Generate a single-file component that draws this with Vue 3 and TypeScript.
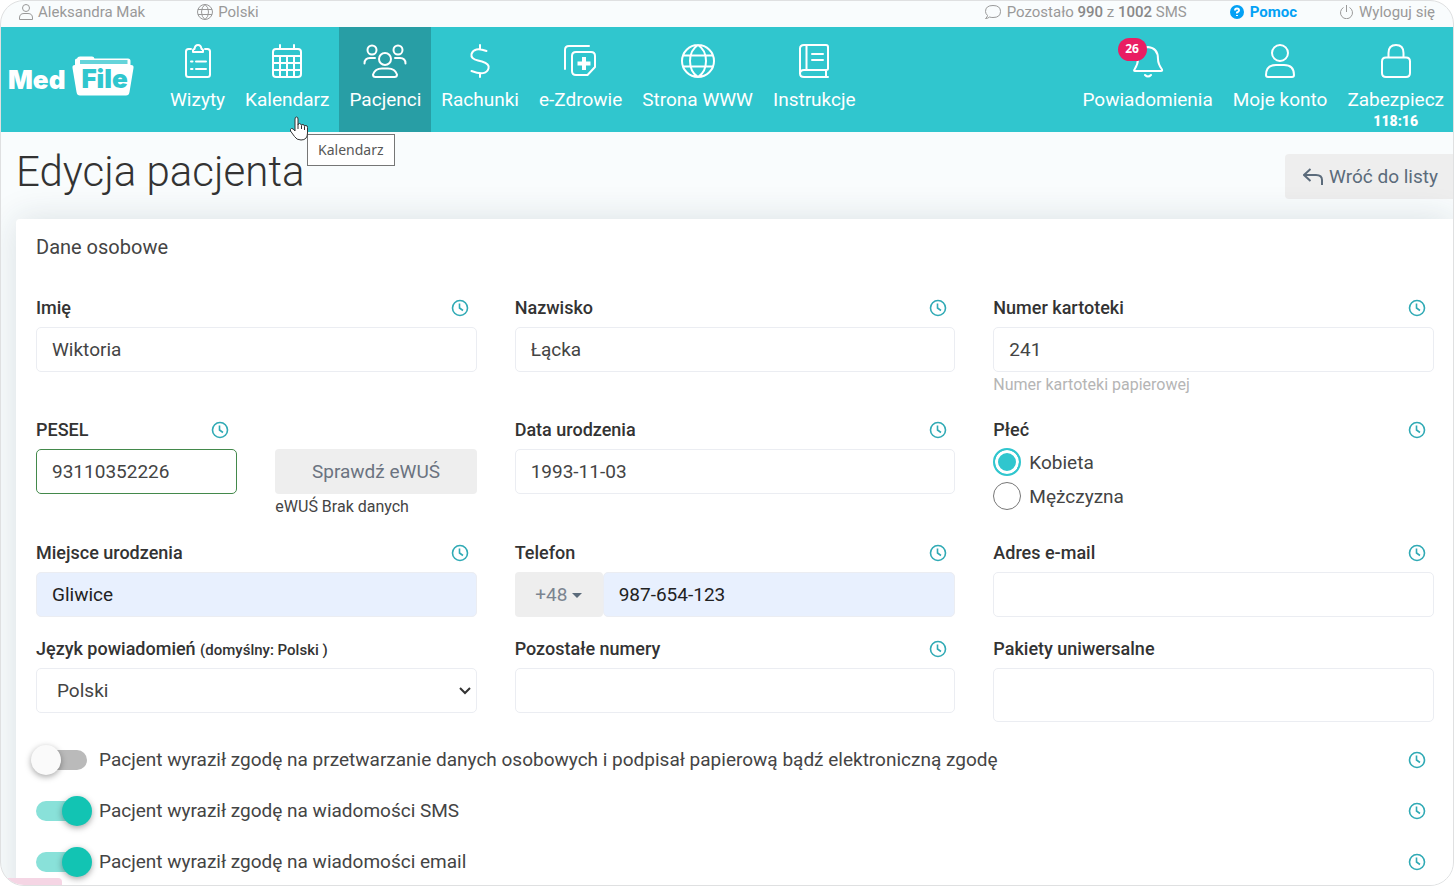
<script setup lang="ts">
import { ref } from 'vue'

interface NavItem { id: string; label: string; active?: boolean; badge?: number; timer?: string }

const mainNav: NavItem[] = [
  { id: 'visits', label: 'Wizyty' },
  { id: 'calendar', label: 'Kalendarz' },
  { id: 'patients', label: 'Pacjenci', active: true },
  { id: 'bills', label: 'Rachunki' },
  { id: 'ehealth', label: 'e-Zdrowie' },
  { id: 'globe', label: 'Strona WWW' },
  { id: 'book', label: 'Instrukcje' },
]
const sideNav: NavItem[] = [
  { id: 'bell', label: 'Powiadomienia', badge: 26 },
  { id: 'user', label: 'Moje konto' },
  { id: 'lock', label: 'Zabezpiecz', timer: '118:16' },
]

/* stroke outlines on a 44 x 34 canvas */
const icons: Record<string, string> = {
  visits: 'M15 5H12.500Q10 5 10 7.500V30.500Q10 33 12.500 33H31.500Q34 33 34 30.500V7.500Q34 5 31.500 5H29M17 8V6.500Q17 5 18.500 5Q19 1 22 1T25.500 5Q27 5 27 6.500V8ZM15 17.500H16.500M15 25H16.500M20 17.500H30M20 25H30',
  calendar: 'M11 5H33Q36 5 36 8V30Q36 33 33 33H11Q8 33 8 30V8Q8 5 11 5ZM8 12H36M8 19H36M8 26H36M15 12V33M22 12V33M29 12V33M15 1V5M29 1V5',
  patients: 'M13.500 6A4.500 4.500 0 1 1 4.500 6A4.500 4.500 0 1 1 13.500 6ZM39.500 6A4.500 4.500 0 1 1 30.500 6A4.500 4.500 0 1 1 39.500 6ZM28 15A6 6 0 1 1 16 15A6 6 0 1 1 28 15ZM1.500 19.500Q1.500 14 7 14H12M42.500 19.500Q42.500 14 37 14H32M12.500 33H31.500Q34 33 34 30.500Q32 24.500 25 24.500H19Q12 24.500 10 30.500Q10 33 12.500 33Z',
  bills: 'M22 1V4.500M22 29.500V33M28.500 7Q16 2.500 13.500 10Q12.500 15 20 16.500L24 17.500Q32 20 30.500 24.500Q28 32.500 13.500 27',
  ehealth: 'M6 25V6Q6 2 10 2H30M17 8H32Q36 8 36 12V23L28.500 31H17Q13 31 13 27V12Q13 8 17 8Z',
  globe: 'M38 17A16 16 0 1 1 6 17A16 16 0 1 1 38 17ZM22 1Q14 6 14 17T22 33Q30 28 30 17T22 1M8 11.500H36M8 22.500H36',
  book: 'M12 1H34Q36 1 36 3V24.500Q36 26 34 26H12Q8 26 8 29.500T12 33H36M8 29.500V4.500Q8 1 12 1M14.500 1V26M34 26V33M20 10H31M20 16H31',
  bell: 'M22 3Q32 4 32 15Q32 20 36 25.500Q36.500 27 35 27H9Q7.500 27 8.500 25.500Q12 20 12 15Q12 4 22 3ZM19 31Q22 34 25 31',
  user: 'M30 9A8 8 0 1 1 14 9A8 8 0 1 1 30 9ZM8 31Q8 21 18 21H26Q36 21 36 31Q36 33 34 33H10Q8 33 8 31Z',
  lock: 'M12 13.500H32Q36 13.500 36 17.500V29Q36 33 32 33H12Q8 33 8 29V17.500Q8 13.500 12 13.500ZM14.500 13.500V9Q14.500 1 22 1T29.500 9V13.500',
}

interface Field { id: string; label: string; value: string; note?: string; help?: string; kind?: string; history?: boolean }

const fields = ref<Field[]>([
  { id: 'first', label: 'Imię', value: 'Wiktoria', history: true },
  { id: 'last', label: 'Nazwisko', value: 'Łącka', history: true },
  { id: 'file', label: 'Numer kartoteki', value: '241', help: 'Numer kartoteki papierowej', history: true },
  { id: 'pesel', label: 'PESEL', value: '93110352226', kind: 'pesel', history: true },
  { id: 'birth', label: 'Data urodzenia', value: '1993-11-03', history: true },
  { id: 'sex', label: 'Płeć', value: 'Kobieta', kind: 'gender', history: true },
  { id: 'place', label: 'Miejsce urodzenia', value: 'Gliwice', kind: 'filled', history: true },
  { id: 'phone', label: 'Telefon', value: '987-654-123', kind: 'phone', history: true },
  { id: 'email', label: 'Adres e-mail', value: '', history: true },
  { id: 'lang', label: 'Język powiadomień', note: '(domyślny: Polski )', value: 'Polski', kind: 'select' },
  { id: 'numbers', label: 'Pozostałe numery', value: '', history: true },
  { id: 'packs', label: 'Pakiety uniwersalne', value: '', kind: 'area' },
])

const consents = ref([
  { id: 'data', on: false, text: 'Pacjent wyraził zgodę na przetwarzanie danych osobowych i podpisał papierową bądź elektroniczną zgodę' },
  { id: 'sms', on: true, text: 'Pacjent wyraził zgodę na wiadomości SMS' },
  { id: 'mail', on: true, text: 'Pacjent wyraził zgodę na wiadomości email' },
])
</script>

<template>
  <div class="frame">
    <div class="topbar">
      <a href="#" class="top-link user-link">
        <svg width="14" height="16" viewBox="0 0 14 16"><path d="M10.500 4A3.500 3.500 0 1 1 3.500 4A3.500 3.500 0 1 1 10.500 4ZM.5 14Q.5 9.500 5 9.500H9Q13.500 9.500 13.500 14V15.500H.5Z" /></svg>
        Aleksandra Mak
      </a>
      <a href="#" class="top-link">
        <svg width="16" height="16" viewBox="0 0 16 16"><path d="M15.500 8A7.500 7.500 0 1 1 .5 8A7.500 7.500 0 1 1 15.500 8ZM8 .5Q4.500 3 4.500 8T8 15.500Q11.500 13 11.500 8T8 .5M1 5.500H15M1 10.500H15" /></svg>
        Polski
      </a>
      <div class="top-right">
        <span class="top-link">
          <svg width="16" height="16" viewBox="0 0 16 16"><path d="M2.500 11.500Q.5 9.500 .5 7.500Q.5 1.500 8 1.500T15.500 7.500T8 13.500Q6 13.500 4.500 13Q3 14.500 .5 14.500Q2.500 13 2.500 11.500Z" /></svg>
          <span>Pozostało <b>990</b> z <b>1002</b> SMS</span>
        </span>
        <a href="#" class="top-link help-link">
          <svg width="14" height="14" viewBox="0 0 14 14"><circle cx="7" cy="7" r="7" fill="#03a1f5" stroke="none" /><path d="M5 5.500Q5 3.500 7 3.500T9 5.500Q9 6.500 7 7.500V8.500M7 10V11" stroke="#fff" stroke-width="2" /></svg>
          Pomoc
        </a>
        <a href="#" class="top-link">
          <svg width="13" height="14" viewBox="0 0 13 14"><path d="M3.500 2.500A6 6 0 1 0 9.500 2.500M6.500 0V7" /></svg>
          Wyloguj się
        </a>
      </div>
    </div>

    <nav class="nav">
      <a href="#" class="logo" aria-label="Med file">
        <span class="logo-med">Med</span>
        <span class="logo-folder">
          <svg width="62" height="40" viewBox="0 0 62 40">
            <path d="M3 11V4Q3 2.500 5 2.500Q5.500 .5 8 .5H20Q22 .5 22.500 2.500H56Q58.500 2.500 58.500 5V11Z" fill="#fff" />
            <path d="M8 4H55.500V8H8Z" fill="#30c6ce" fill-opacity=".75" />
            <path d="M3 9H59Q62 9 61.500 12L57.500 36Q57 39.500 54 39.500H8Q5 39.500 4.500 36L.5 12Q0 9 3 9Z" fill="#fff" />
          </svg>
          <span class="logo-file">File</span>
        </span>
      </a>
      <a v-for="n in mainNav" :key="n.id" href="#" class="nav-item" :class="{ active: n.active }">
        <svg width="44" height="34" viewBox="0 0 44 34"><path :d="icons[n.id]" /><path v-if="n.id === 'ehealth'" d="M25 13V26M18.500 19.500H31.500" class="thick" /></svg>
        <span>{{ n.label }}</span>
      </a>
      <div class="nav-right">
        <a v-for="n in sideNav" :key="n.id" href="#" class="nav-item">
          <span class="icon-wrap">
            <svg width="44" height="34" viewBox="0 0 44 34"><path :d="icons[n.id]" /></svg>
            <span v-if="n.badge" class="badge">{{ n.badge }}</span>
          </span>
          <span>{{ n.label }}</span>
          <span v-if="n.timer" class="timer">{{ n.timer }}</span>
        </a>
      </div>
    </nav>

    <header class="heading">
      <h1>Edycja pacjenta</h1>
      <button type="button" class="back">
        <svg width="20" height="18" viewBox="0 0 20 18"><path d="M7.500 1L1 7L7.500 13M1 7H13Q19 7 19 12V17" /></svg>
        Wróć do listy
      </button>
    </header>

    <main class="card">
      <h2>Dane osobowe</h2>
      <form class="grid" @submit.prevent>
        <div v-for="f in fields" :key="f.id" class="field" :class="f.kind">
          <div class="label-row">
            <label :for="f.id">{{ f.label }} <small v-if="f.note">{{ f.note }}</small></label>
            <svg v-if="f.history" class="clock" width="18" height="18" viewBox="0 0 18 18"><circle cx="9" cy="9" r="7.500" /><path d="M8.500 4.500V9L12 11.500" /></svg>
          </div>

          <template v-if="f.kind === 'pesel'">
            <input :id="f.id" v-model="f.value" type="text" class="control valid" />
            <div class="ewus">
              <button type="button" class="check">Sprawdź eWUŚ</button>
              <p class="status">eWUŚ Brak danych</p>
            </div>
          </template>
          <div v-else-if="f.kind === 'gender'" class="radios">
            <label v-for="(o, i) in ['Kobieta', 'Mężczyzna']" :key="o" class="radio">
              <input :id="i ? undefined : f.id" v-model="f.value" type="radio" name="sex" :value="o" />{{ o }}
            </label>
          </div>
          <div v-else-if="f.kind === 'phone'" class="phone-group">
            <button type="button" class="prefix">+48 <svg width="10" height="5" viewBox="0 0 10 5"><path d="M0 0H10L5 5Z" /></svg></button>
            <input :id="f.id" v-model="f.value" type="tel" class="control autofill" />
          </div>
          <div v-else-if="f.kind === 'select'" class="select-wrap">
            <select :id="f.id" v-model="f.value" class="control"><option>Polski</option></select>
            <svg class="chevron" width="12" height="8" viewBox="0 0 12 8"><path d="M1 1L6 6L11 1" /></svg>
          </div>
          <textarea v-else-if="f.kind === 'area'" :id="f.id" v-model="f.value" class="control tall"></textarea>
          <input v-else :id="f.id" v-model="f.value" type="text" class="control" :class="{ autofill: f.kind === 'filled' }" />
          <p v-if="f.help" class="help">{{ f.help }}</p>
        </div>
      </form>

      <div class="consents">
        <div v-for="c in consents" :key="c.id" class="consent">
          <label><input v-model="c.on" type="checkbox" class="toggle" />{{ c.text }}</label>
          <svg class="clock" width="18" height="18" viewBox="0 0 18 18"><circle cx="9" cy="9" r="7.500" /><path d="M8.500 4.500V9L12 11.500" /></svg>
        </div>
      </div>
    </main>

    <div class="tooltip" role="tooltip">Kalendarz</div>
    <svg class="cursor" width="20" height="26" viewBox="0 0 20 26"><path d="M6 15V3Q6 1 7.500 1T9 3V9Q9 7.500 10.500 7.500T12.500 9.500Q12.500 8.500 14 8.500T15.500 10.500Q15.500 9.500 17 9.500T18.500 11.500V17Q18.500 24 12 24Q7.500 24 5.500 20.500L1.500 15Q1 13 2.500 12.500T6 15Z" /><path d="M9 9V13M12.500 10V13M15.500 11V14" /></svg>
    <div class="corner-strip"></div>
  </div>
</template>

<style>
html, body { margin: 0; background: #fff; }
</style>

<style scoped>
* { box-sizing: border-box; }
.frame {
  position: relative; height: 100vh; overflow: hidden; display: flex; flex-direction: column;
  border: 1px solid #dfe0e1; border-radius: 24px; background: #f9fcfd;
  font-family: Roboto, "Liberation Sans", sans-serif; font-size: 19px; color: #444;
}
svg { fill: none; flex: none; }
a { text-decoration: none; color: inherit; }
button, input, select, textarea { font: inherit; color: inherit; margin: 0; }

.topbar { flex: none; display: flex; height: 26px; padding: 0 18px 4px; align-items: center; font-size: 15px; color: #999; }
.top-link { display: flex; align-items: center; gap: 5px; white-space: nowrap; }
.top-link svg { stroke: #999; }
.top-link b { font-weight: 500; color: #888; }
.user-link { margin-right: 52px; }
.top-right { display: flex; gap: 43px; margin-left: auto; }
.top-right .top-link { gap: 6px; }
.help-link { color: #03a1f5; font-weight: 700; }

.nav { flex: none; display: flex; height: 105px; background: #30c6ce; color: #fff; }
.logo { display: flex; align-items: flex-start; width: 159px; padding: 29px 0 0 7px; font: 900 26px/30px Inter, sans-serif; }
.logo-med { padding-top: 9px; }
.logo-folder { position: relative; margin-left: 7px; }
.logo-file { position: absolute; left: 9px; top: 8px; color: #30c6ce; }
.nav-item { display: flex; flex-direction: column; align-items: center; padding: 17px 10px 0; line-height: 24px; white-space: nowrap; }
.nav-item svg { display: block; margin-bottom: 10px; stroke: #fff; stroke-width: 2; stroke-linecap: round; stroke-linejoin: round; }
.nav-item .thick { stroke-width: 4; stroke-linecap: butt; }
.nav-item.active { background: #289ea5; }
.nav-right { display: flex; margin-left: auto; }
.nav-right .nav-item:last-child { padding-right: 9px; }
.icon-wrap { position: relative; }
.badge {
  position: absolute; left: -8px; top: -6px; width: 29px; height: 23px; border-radius: 12px;
  background: #e91e63; font: 700 12px/22px "Open Sans", sans-serif; text-align: center;
}
.timer { font-size: 14px; font-weight: 900; line-height: 18px; }

.heading { flex: none; display: flex; justify-content: space-between; align-items: flex-start; height: 87px; padding-left: 15px; }
h1 { margin: 15px 0 0; font-size: 42px; font-weight: 300; line-height: 50px; color: #333; }
.back {
  display: flex; align-items: center; gap: 6px; height: 45px; margin-top: 22px; padding: 0 15px 0 18px;
  border: 0; border-radius: 4px 0 0 4px; background: #eee; color: #5b6b7b;
}
.back svg { stroke: #5b6b7b; stroke-width: 2; }

.card {
  flex: none; margin-left: 15px; padding: 16px 19px 24px 20px; border-radius: 4px 0 0 0;
  background: #fff; box-shadow: 0 0 35px rgba(30, 60, 70, .14);
}
h2 { margin: 0 0 36px; font-size: 20px; font-weight: 400; line-height: 25px; }
.grid { display: grid; grid-template-columns: repeat(3, minmax(0, 1fr)); column-gap: 38px; row-gap: 20px; }
.label-row { display: flex; justify-content: space-between; align-items: center; height: 24px; margin-bottom: 7px; padding-right: 8px; }
.label-row label { padding-bottom: 2px; font-size: 18px; font-weight: 500; color: #333; white-space: nowrap; }
small { font-size: 15px; }
.clock { stroke: #30aab5; stroke-width: 1.600; }
.control {
  display: block; width: 100%; height: 45px; padding: 0 15px; border: 1px solid #ebedf2;
  border-radius: 5px; background: #fff; outline: 0; appearance: none; resize: none;
}
.control.valid { border-color: #43894b; }
.control.autofill { background: #e8f0fe; color: #222; }
.control.tall { height: 54px; }
.help, .status { margin: 0; height: 26px; font-size: 16px; line-height: 26px; }
.help { color: #b5b5b5; }
.pesel { display: grid; grid-template-columns: 1fr 1fr; grid-template-rows: auto 1fr; column-gap: 38px; }
.pesel .control { grid-area: 2 / 1; }
.ewus { grid-area: 2 / 2; }
.check { display: block; width: 100%; height: 45px; border: 0; border-radius: 4px; background: #eee; color: #6b7380; }
.gender .label-row { margin-bottom: 3px; }
.radios { padding-bottom: 8px; }
.radio { display: flex; align-items: center; gap: 8px; height: 34px; }
.radios input { appearance: none; width: 28px; height: 28px; border: 1px solid #777; border-radius: 50%; }
.radios input:checked { border: 2px solid #30c6ce; background: #30c6ce; box-shadow: inset 0 0 0 3px #fff; }
.phone-group { display: flex; }
.prefix { flex: none; width: 88px; height: 45px; border: 0; border-radius: 4px; background: #eee; color: #7b8490; }
.prefix path { fill: #5b6b7b; }
.prefix svg { vertical-align: middle; }
.select-wrap { position: relative; }
.select-wrap .control { padding-left: 20px; }
.chevron { position: absolute; right: 6px; top: 19px; stroke: #333; stroke-width: 2; pointer-events: none; }

.consents { margin-top: 12px; }
.consent { display: flex; align-items: center; justify-content: space-between; height: 51px; padding-right: 8px; }
.consent label { display: flex; align-items: center; gap: 12px; }
.toggle { appearance: none; position: relative; width: 51px; height: 20px; border-radius: 10px; background: #bababa; }
.toggle::before {
  content: ""; position: absolute; left: -5px; top: -5px; width: 30px; height: 30px; border-radius: 50%;
  background: #fafafa; box-shadow: 0 2px 6px rgba(0, 0, 0, .35);
}
.toggle:checked { background: #89e1d9; }
.toggle:checked::before { left: 26px; background: #12c4b3; }

.tooltip {
  position: absolute; left: 306px; top: 133px; padding: 0 10px; border: 1px solid #767676; background: #fff;
  font: 14px/30px "Noto Sans", sans-serif; color: #575757;
}
.cursor { position: absolute; left: 288px; top: 115px; stroke: #333; stroke-width: 1; }
.cursor path:first-child { fill: #fff; }
.corner-strip { position: absolute; left: 0; bottom: 0; width: 61px; height: 7px; border-radius: 0 4px 0 0; background: #f5d5e4; }
</style>
